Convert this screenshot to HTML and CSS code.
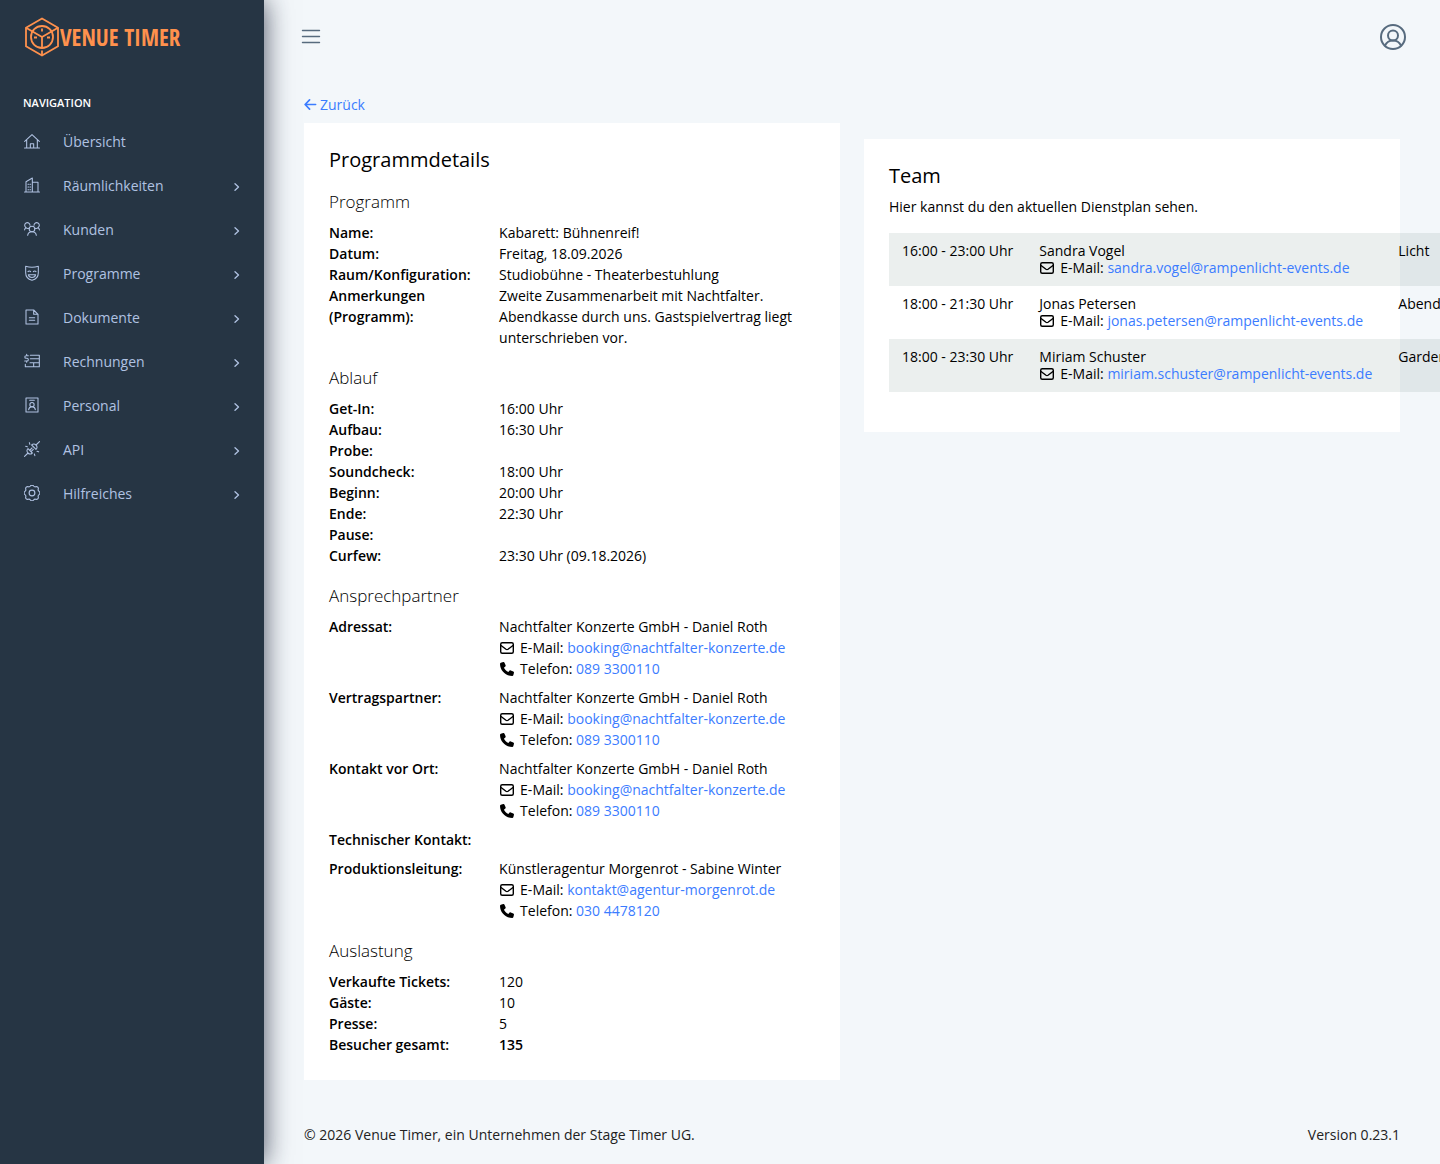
FILE: index.html
```html
<!DOCTYPE html>
<html lang="de">
<head>
    <meta charset="UTF-8">
    <meta name="viewport" content="width=device-width, initial-scale=1.0">
    <title>Programmdetails - Venue Timer</title>
    <link rel="stylesheet" href="styles.css">
</head>
<body>
    <!-- shared icons -->
    <svg class="sprite" aria-hidden="true">
        <symbol id="chevron" viewBox="0 0 8 8"><path d="M2 .7 5.500 4 2 7.300"/></symbol>
        <symbol id="mail" viewBox="0 0 16 16"><rect x="1.700" y="2.700" width="12.600" height="10.600" rx="1.500"/><path d="M1.700 5.200 7 9.300q1 .7 2 0l5.300-4.100"/></symbol>
        <symbol id="phone" viewBox="0 0 512 512"><path d="M164.900 24.600c-7.700-18.600-28-28.500-47.400-23.200l-88 24C12.100 30.200 0 46 0 64c0 247.400 200.600 448 448 448 18 0 33.800-12.100 38.600-29.500l24-88c5.300-19.400-4.600-39.700-23.200-47.400l-96-40c-16.300-6.800-35.200-2.100-46.300 11.600L304.700 368C234.300 334.700 177.300 277.700 144 207.300L193.300 167c13.700-11.200 18.400-30 11.600-46.300l-40-96z"/></symbol>
    </svg>

    <div class="layout">
        <aside class="sidebar">
            <a class="logo" href="#">
                <svg viewBox="0 0 36 40" aria-hidden="true">
                    <path d="M18 1.500 34 10.700v18.600L18 38.500 2 29.300V10.700z"/>
                    <circle cx="18" cy="20" r="11"/>
                    <path d="M2 10.700 18 20l16-9.300M18 20v11M18 33.500v5M18 11.500v3M10 20.500h3M23 20.500h3"/>
                </svg>
                <span>VENUE TIMER</span>
            </a>
            <h6 class="nav-title">Navigation</h6>
            <nav>
                <a class="nav-item" href="#">
                    <svg class="icon" viewBox="0 0 24 24"><path d="M.8 22.500h22.400M1 12.500 12 2.500l11 10M4 10v12.500M20 10v12.500M9.500 22.500v-6.500h5v6.500"/></svg>
                    <span>Übersicht</span>
                </a>
                <a class="nav-item" href="#">
                    <svg class="icon" viewBox="0 0 24 24"><path d="M.8 22.500h22.400M3 22.500V7l9.500-5.500v21M12.500 8H21v14.500M6 11h1M9 11h1M6 15h1M9 15h1M6 19h1M9 19h1"/></svg>
                    <span>Räumlichkeiten</span>
                    <svg class="chevron"><use href="#chevron"/></svg>
                </a>
                <a class="nav-item" href="#">
                    <svg class="icon" viewBox="0 0 24 24"><circle cx="12" cy="12" r="4.200"/><path d="M5.500 21.500c.5-3.500 3-5.300 6.500-5.300s6 1.800 6.500 5.300M9 6.500A4 4 0 1 0 3 10c-1.300.7-2 2-2.200 3.500M3 10c1.300 1.200 3 1.300 4.200.8M15 6.500A4 4 0 1 1 21 10c1.300.7 2 2 2.200 3.500M21 10c-1.300 1.200-3 1.300-4.200.8"/></svg>
                    <span>Kunden</span>
                    <svg class="chevron"><use href="#chevron"/></svg>
                </a>
                <a class="nav-item" href="#">
                    <svg class="icon" viewBox="0 0 24 24"><path d="M2.500 2c6 1.800 13 1.800 19 0v9.500c0 6-4 10-9.500 11.500-5.500-1.500-9.500-5.500-9.500-11.500zM6 10c1-1.300 3-1.300 4 0M14 10c1-1.300 3-1.300 4 0M6.500 14.500h11c-.5 2.700-2.700 4.300-5.500 4.300s-5-1.600-5.500-4.300z"/></svg>
                    <span>Programme</span>
                    <svg class="chevron"><use href="#chevron"/></svg>
                </a>
                <a class="nav-item" href="#">
                    <svg class="icon" viewBox="0 0 24 24"><path d="M3 1.500h11.500L21 8v14.500H3zM14.500 1.500V8H21M8 13h8M8 17h8"/></svg>
                    <span>Dokumente</span>
                    <svg class="chevron"><use href="#chevron"/></svg>
                </a>
                <a class="nav-item" href="#">
                    <svg class="icon" viewBox="0 0 24 24"><path d="M9.500 3.500H23v17H2v-3.500M9.500 8.500H23M9 14.500h14M14.500 14.500v6M6.500 4H3.200a2 2 0 0 0 0 4H4.500a2 2 0 0 1 0 4H1M4 2v2M4 12v2"/></svg>
                    <span>Rechnungen</span>
                    <svg class="chevron"><use href="#chevron"/></svg>
                </a>
                <a class="nav-item" href="#">
                    <svg class="icon" viewBox="0 0 24 24"><path d="M3 1.500h18v21H3zM8.500 5h7M7 19c.3-3 2-4.500 5-4.500s4.700 1.500 5 4.500"/><circle cx="12" cy="11.500" r="3.200"/></svg>
                    <span>Personal</span>
                    <svg class="chevron"><use href="#chevron"/></svg>
                </a>
                <a class="nav-item" href="#">
                    <svg class="icon" viewBox="0 0 24 24"><path d="M.8 23.200 6 18M18 6 23.200.8M6 18c-2.200-2.200-2-4.500 0-6.500l6.500 6.500C10.500 20 8.200 20.200 6 18zM18 6c2.200 2.200 2 4.500 0 6.500L11.500 6c2-2 4.300-2.200 6.500 0zM8.500 14l3.500-3.500M10.500 16l3.500-3.500M8 2.500l.8 2.500M2.500 8l2.500.8M15.500 19.500l.8 2.500M19.500 15.500l2.500.8"/></svg>
                    <span>API</span>
                    <svg class="chevron"><use href="#chevron"/></svg>
                </a>
                <a class="nav-item" href="#">
                    <svg class="icon gear" viewBox="2 2 20 20"><circle cx="12" cy="12" r="3.600"/><path d="M10 3.200a2.400 2.400 0 0 1 4 0 2.500 2.500 0 0 0 2.600 1 2.400 2.400 0 0 1 3.200 3 2.500 2.500 0 0 0 1 2.800 2.400 2.400 0 0 1 0 4 2.500 2.500 0 0 0-1 2.800 2.400 2.400 0 0 1-3.200 3 2.500 2.500 0 0 0-2.600 1 2.400 2.400 0 0 1-4 0 2.500 2.500 0 0 0-2.600-1 2.400 2.400 0 0 1-3.200-3 2.500 2.500 0 0 0-1-2.800 2.400 2.400 0 0 1 0-4 2.500 2.500 0 0 0 1-2.800 2.400 2.400 0 0 1 3.200-3 2.500 2.500 0 0 0 2.600-1z"/></svg>
                    <span>Hilfreiches</span>
                    <svg class="chevron"><use href="#chevron"/></svg>
                </a>
            </nav>
        </aside>

        <div class="page">
            <header class="topbar">
                <button type="button" class="icon-button" aria-label="Menü">
                    <svg class="menu-icon" viewBox="0 0 20 20"><path d="M1.500 3.500h17M1.500 9.500h17M1.500 15.500h17"/></svg>
                </button>
                <button type="button" class="icon-button" aria-label="Profil">
                    <svg class="user-icon" viewBox="0 0 26 26"><circle cx="13" cy="13" r="12"/><circle cx="13" cy="11.500" r="5"/><path d="M5 21.500c1.500-3.200 4.500-5 8-5s6.500 1.800 8 5"/></svg>
                </button>
            </header>

            <main class="content">
                <a class="back" href="#">
                    <svg viewBox="0 0 14 14" aria-hidden="true"><path d="M12.500 7H1.500M6 2 1.200 7 6 12"/></svg>
                    Zurück
                </a>

                <div class="columns">
                    <section class="card">
                        <h2>Programmdetails</h2>

                        <h3>Programm</h3>
                        <dl class="details">
                            <dt>Name:</dt>
                            <dd>Kabarett: Bühnenreif!</dd>
                            <dt>Datum:</dt>
                            <dd>Freitag, 18.09.2026</dd>
                            <dt>Raum/Konfiguration:</dt>
                            <dd>Studiobühne - Theaterbestuhlung</dd>
                            <dt>Anmerkungen (Programm):</dt>
                            <dd>Zweite Zusammenarbeit mit Nachtfalter. Abendkasse durch uns. Gastspielvertrag liegt unterschrieben vor.</dd>
                        </dl>

                        <h3>Ablauf</h3>
                        <dl class="details">
                            <dt>Get-In:</dt>
                            <dd>16:00 Uhr</dd>
                            <dt>Aufbau:</dt>
                            <dd>16:30 Uhr</dd>
                            <dt>Probe:</dt>
                            <dd></dd>
                            <dt>Soundcheck:</dt>
                            <dd>18:00 Uhr</dd>
                            <dt>Beginn:</dt>
                            <dd>20:00 Uhr</dd>
                            <dt>Ende:</dt>
                            <dd>22:30 Uhr</dd>
                            <dt>Pause:</dt>
                            <dd></dd>
                            <dt>Curfew:</dt>
                            <dd>23:30 Uhr (09.18.2026)</dd>
                        </dl>

                        <h3>Ansprechpartner</h3>
                        <dl class="details contacts">
                            <dt>Adressat:</dt>
                            <dd>
                                <div>Nachtfalter Konzerte GmbH - Daniel Roth</div>
                                <div><svg class="mail"><use href="#mail"/></svg>E-Mail: <a href="mailto:booking@nachtfalter-konzerte.de">booking@nachtfalter-konzerte.de</a></div>
                                <div><svg class="phone"><use href="#phone"/></svg>Telefon: <a href="tel:0893300110">089 3300110</a></div>
                            </dd>
                            <dt>Vertragspartner:</dt>
                            <dd>
                                <div>Nachtfalter Konzerte GmbH - Daniel Roth</div>
                                <div><svg class="mail"><use href="#mail"/></svg>E-Mail: <a href="mailto:booking@nachtfalter-konzerte.de">booking@nachtfalter-konzerte.de</a></div>
                                <div><svg class="phone"><use href="#phone"/></svg>Telefon: <a href="tel:0893300110">089 3300110</a></div>
                            </dd>
                            <dt>Kontakt vor Ort:</dt>
                            <dd>
                                <div>Nachtfalter Konzerte GmbH - Daniel Roth</div>
                                <div><svg class="mail"><use href="#mail"/></svg>E-Mail: <a href="mailto:booking@nachtfalter-konzerte.de">booking@nachtfalter-konzerte.de</a></div>
                                <div><svg class="phone"><use href="#phone"/></svg>Telefon: <a href="tel:0893300110">089 3300110</a></div>
                            </dd>
                            <dt>Technischer Kontakt:</dt>
                            <dd></dd>
                            <dt>Produktionsleitung:</dt>
                            <dd>
                                <div>Künstleragentur Morgenrot - Sabine Winter</div>
                                <div><svg class="mail"><use href="#mail"/></svg>E-Mail: <a href="mailto:kontakt@agentur-morgenrot.de">kontakt@agentur-morgenrot.de</a></div>
                                <div><svg class="phone"><use href="#phone"/></svg>Telefon: <a href="tel:0304478120">030 4478120</a></div>
                            </dd>
                        </dl>

                        <h3>Auslastung</h3>
                        <dl class="details">
                            <dt>Verkaufte Tickets:</dt>
                            <dd>120</dd>
                            <dt>Gäste:</dt>
                            <dd>10</dd>
                            <dt>Presse:</dt>
                            <dd>5</dd>
                            <dt>Besucher gesamt:</dt>
                            <dd class="total">135</dd>
                        </dl>
                    </section>

                    <section class="card team">
                        <h2>Team</h2>
                        <p>Hier kannst du den aktuellen Dienstplan sehen.</p>
                        <table>
                            <tbody>
                                <tr>
                                    <td>16:00 - 23:00 Uhr</td>
                                    <td>Sandra Vogel<br><svg class="mail"><use href="#mail"/></svg>E-Mail: <a href="mailto:sandra.vogel@rampenlicht-events.de">sandra.vogel@rampenlicht-events.de</a></td>
                                    <td>Licht</td>
                                </tr>
                                <tr>
                                    <td>18:00 - 21:30 Uhr</td>
                                    <td>Jonas Petersen<br><svg class="mail"><use href="#mail"/></svg>E-Mail: <a href="mailto:jonas.petersen@rampenlicht-events.de">jonas.petersen@rampenlicht-events.de</a></td>
                                    <td>Abendkasse</td>
                                </tr>
                                <tr>
                                    <td>18:00 - 23:30 Uhr</td>
                                    <td>Miriam Schuster<br><svg class="mail"><use href="#mail"/></svg>E-Mail: <a href="mailto:miriam.schuster@rampenlicht-events.de">miriam.schuster@rampenlicht-events.de</a></td>
                                    <td>Garderobe</td>
                                </tr>
                            </tbody>
                        </table>
                    </section>
                </div>
            </main>

            <footer class="footer">
                <span>© 2026 Venue Timer, ein Unternehmen der Stage Timer UG.</span>
                <span>Version 0.23.1</span>
            </footer>
        </div>
    </div>
</body>
</html>
```

FILE: styles.css
```css
* { box-sizing: border-box; }
body { margin: 0; background: #f3f7fa; color: #000; font-family: "Open Sans", sans-serif; font-size: 14px; line-height: 21px; overflow-x: hidden; }
a { color: #3b7cff; text-decoration: none; }
svg { fill: none; stroke: currentColor; stroke-linecap: round; stroke-linejoin: round; }
.sprite { position: absolute; width: 0; height: 0; }
.layout { display: flex; min-height: 100vh; }

/* Sidebar */
.sidebar { flex: 0 0 264px; background: #263544; color: #b0c2e2; box-shadow: 0 0 26px rgba(20, 27, 50, 0.75); }
.logo { display: flex; align-items: center; height: 74px; padding-left: 24px; color: #ff914d; }
.logo svg { width: 36px; height: 40px; stroke-width: 1.8; stroke-linecap: butt; stroke-linejoin: miter; }
.logo span { font-family: "Open Sans Condensed", "Liberation Sans", sans-serif; font-weight: bold; font-size: 23px; white-space: nowrap; }
.nav-title { margin: 18px 0 5px; padding-left: 23px; color: #fff; font-size: 11px; font-weight: 600; line-height: 22px; text-transform: uppercase; }
.nav-item { display: flex; align-items: center; height: 44px; padding: 0 23px 0 24px; color: inherit; }
.nav-item span { flex: 1; }
.icon { width: 16px; height: 16px; margin-right: 23px; stroke-width: 1.6; }
.gear { stroke-width: 1.4; }
.chevron { width: 8px; height: 8px; margin-top: 4px; stroke-width: 1.3; }

/* Page */
.page { flex: 1; min-width: 0; display: flex; flex-direction: column; }
.topbar { display: flex; align-items: center; justify-content: space-between; height: 74px; padding: 0 34px 0 37px; }
.icon-button { display: flex; padding: 0; border: 0; background: none; color: #576b7e; cursor: pointer; }
.menu-icon { width: 20px; height: 20px; stroke-width: 1.4; }
.user-icon { width: 26px; height: 26px; stroke-width: 2; }
.content { flex: 1; padding: 20px 40px 0; }
.back { display: inline-flex; align-items: center; gap: 3px; margin-bottom: 8px; vertical-align: top; }
.back svg { width: 13px; height: 13px; stroke-width: 1.8; }
.columns { display: grid; grid-template-columns: 1fr 1fr; gap: 24px; align-items: start; }
.card { min-width: 0; padding: 25px; background: #fff; }
.card h2 { margin: 0 0 8px; font-size: 20px; font-weight: 400; line-height: 24px; }
.card h3 { margin: 19px 0 9px; font-size: 17px; font-weight: 300; line-height: 22px; }
.details { display: grid; grid-template-columns: 35% 1fr; margin: 0; }
.details dt { padding-right: 24px; font-weight: 600; }
.details dd { margin: 0; }
.details .total { font-weight: 600; }
.contacts { row-gap: 8px; }
.mail, .phone { width: 16px; height: 16px; margin-right: 5px; vertical-align: -3px; }
.mail { stroke-width: 1.4; }
.phone { height: 14px; padding: 0 1px; fill: currentColor; stroke: none; vertical-align: -2px; }

/* Team */
.team { margin-top: 16px; }
.team p { margin: 0 0 16px; }
.team table { margin-bottom: 15px; border-collapse: collapse; }
.team td { padding: 9px 13px 10px; line-height: 17px; vertical-align: top; white-space: nowrap; }
.team tr:nth-child(odd) { background: rgba(55, 95, 85, 0.1); }

.footer { display: flex; justify-content: space-between; padding: 43px 40px 19px; color: #222; }
```
